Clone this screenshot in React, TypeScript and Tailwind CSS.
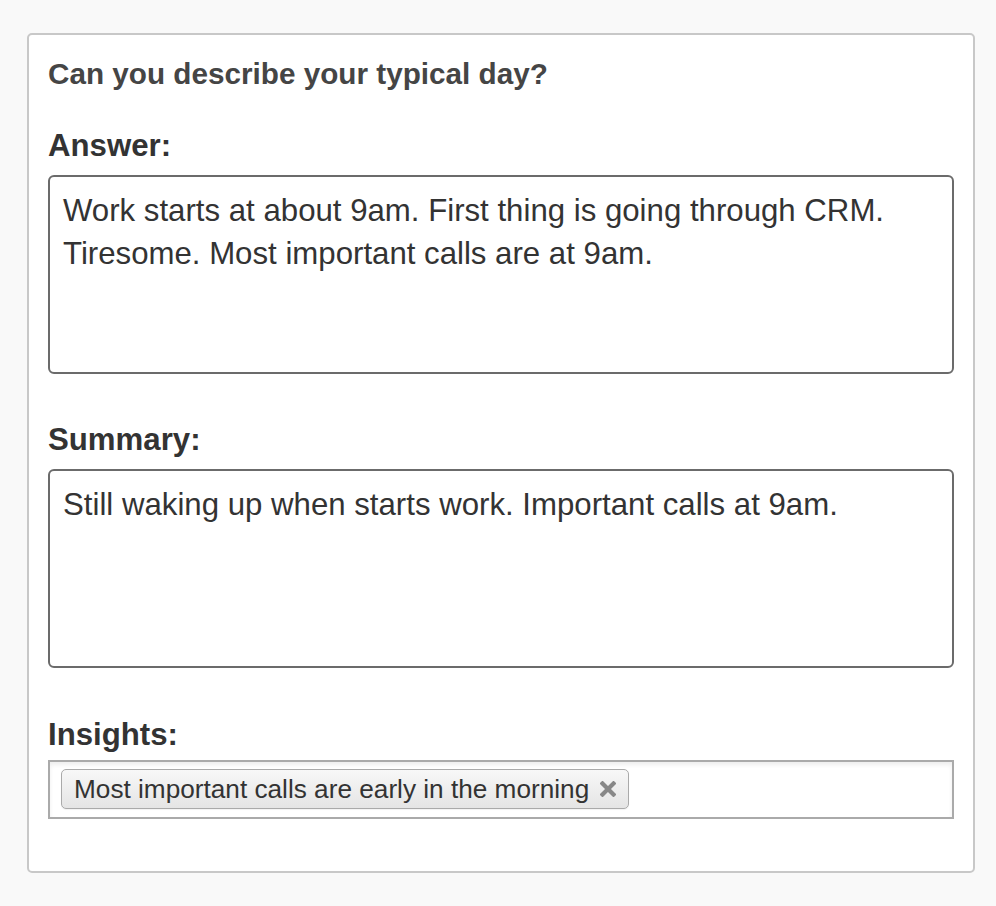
const font = { fontFamily: '"Liberation Sans", Arial, Helvetica, sans-serif' };

function Field({ label, text, className }: { label: string; text: string; className?: string }) {
    return (
        <div className={className}>
            <div className="text-[31.2px] leading-[38px] font-bold text-[#333]">{label}</div>
            <div className="mt-[10px] h-[199px] rounded-[6px] border-2 border-[#6b6b6b] bg-white pt-[12px] pl-[13px] pr-4 text-[31.2px] leading-[43px] text-[#333]">
                {text}
            </div>
        </div>
    );
}

export default function App() {
    return (
        <div className="min-h-[906px] bg-[#f9f9f9] pt-[33px] pl-[27px]" style={font}>
            <div className="w-[948px] rounded-[5px] border-2 border-[#c8c8c8] bg-white px-[19px] pt-[21px] pb-[52px]">
                <h2 className="text-[29.7px] leading-[36px] font-bold text-[#454545]">Can you describe your typical day?</h2>

                <Field
                    className="mt-[35px]"
                    label="Answer:"
                    text="Work starts at about 9am. First thing is going through CRM. Tiresome. Most important calls are at 9am."
                />
                <Field
                    className="mt-[47px]"
                    label="Summary:"
                    text="Still waking up when starts work. Important calls at 9am."
                />

                <div className="mt-[48px]">
                    <div className="text-[31.2px] leading-[38px] font-bold text-[#333]">Insights:</div>
                    <div className="mt-[6px] h-[59px] border-2 border-[#aaaaaa] bg-white pt-[7px] pl-[11px] shadow-[inset_0_3px_4px_rgba(0,0,0,0.07)]">
                        <div className="inline-flex h-[40px] items-center rounded-[5px] border border-[#aaaaaa] bg-gradient-to-b from-[#f8f8f8] to-[#e5e5e5] pl-[12px] pr-[12px] shadow-[0_1px_1px_rgba(0,0,0,0.05)]">
                            <span className="text-[26.2px] leading-[38px] text-[#333]">Most important calls are early in the morning</span>
                            <svg className="ml-[11px] h-[16px] w-[16px]" viewBox="0 0 16 16">
                                <path d="M2.5 2.5 L13.5 13.5 M13.5 2.5 L2.5 13.5" stroke="#888" strokeWidth="4.2" strokeLinecap="square" />
                            </svg>
                        </div>
                    </div>
                </div>
            </div>
        </div>
    );
}
